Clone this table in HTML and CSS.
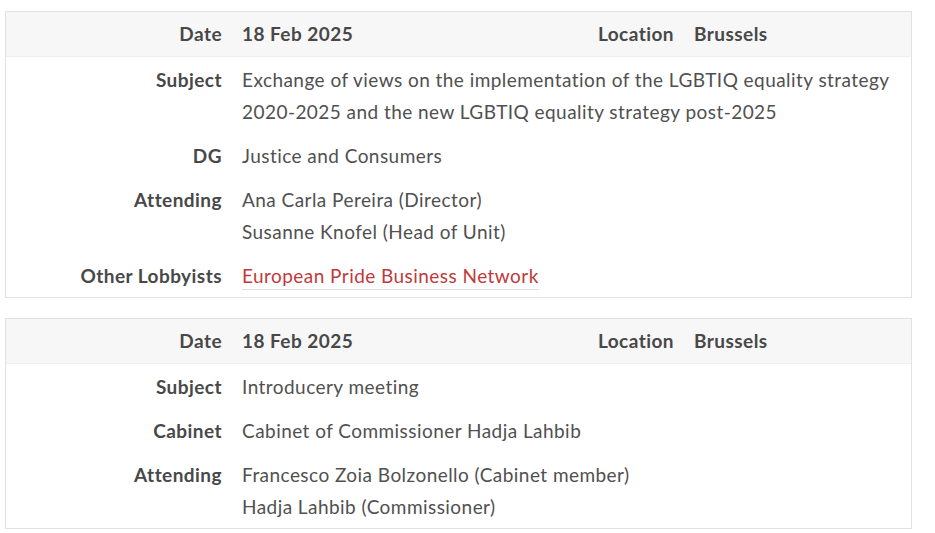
FILE: index.html
```html
<!DOCTYPE html>
<html lang="en">
<head>
<meta charset="utf-8">
<title>Meetings</title>
<link rel="stylesheet" href="styles.css">
</head>
<body>
<div class="list">
  <section class="card">
    <div class="head">
      <div class="lbl">Date</div>
      <div class="hval">18 Feb 2025</div>
      <div class="lbl">Location</div>
      <div class="hval">Brussels</div>
    </div>
    <div class="row">
      <div class="lbl">Subject</div>
      <div class="val">Exchange of views on the implementation of the LGBTIQ equality strategy 2020-2025 and the new LGBTIQ equality strategy post-2025</div>
    </div>
    <div class="row">
      <div class="lbl">DG</div>
      <div class="val">Justice and Consumers</div>
    </div>
    <div class="row">
      <div class="lbl">Attending</div>
      <div class="val">Ana Carla Pereira (Director)<br>Susanne Knofel (Head of Unit)</div>
    </div>
    <div class="row">
      <div class="lbl">Other Lobbyists</div>
      <div class="val"><a class="link" href="#">European Pride Business Network</a></div>
    </div>
  </section>
  <section class="card">
    <div class="head">
      <div class="lbl">Date</div>
      <div class="hval">18 Feb 2025</div>
      <div class="lbl">Location</div>
      <div class="hval">Brussels</div>
    </div>
    <div class="row">
      <div class="lbl">Subject</div>
      <div class="val">Introducery meeting</div>
    </div>
    <div class="row">
      <div class="lbl">Cabinet</div>
      <div class="val">Cabinet of Commissioner Hadja Lahbib</div>
    </div>
    <div class="row">
      <div class="lbl">Attending</div>
      <div class="val">Francesco Zoia Bolzonello (Cabinet member)<br>Hadja Lahbib (Commissioner)</div>
    </div>
  </section>
</div>
</body>
</html>
```
FILE: styles.css
```css
html, body {
  margin: 0;
  padding: 0;
  background: #ffffff;
}
body {
  font-family: Lato, "Open Sans", "Liberation Sans", sans-serif;
  font-size: 19px;
  line-height: 32px;
  letter-spacing: 0.45px;
  color: #505050;
}
.list {
  padding: 11px 0 0 5px;
  width: 907px;
  display: flex;
  flex-direction: column;
  gap: 20px;
}
.card {
  border: 1px solid #e2e2e2;
  padding-bottom: 5px;
}
.head {
  display: grid;
  grid-template-columns: 226px 352px 100px 1fr;
  background: #f7f7f7;
  border-bottom: 1px solid #efefef;
  padding: 6px 0;
  margin-bottom: 7px;
}
.row {
  display: grid;
  grid-template-columns: 226px 1fr;
  padding: 0 0 12px;
}
.row:last-child {
  padding-bottom: 0;
}
.lbl {
  text-align: right;
  font-weight: 700;
  color: #484848;
  padding: 0 10px;
}
.hval {
  font-weight: 700;
  color: #484848;
  padding: 0 10px;
}
.val {
  padding: 0 10px;
  color: #505050;
}
.link {
  color: #c0393b;
  text-decoration: none;
  border-bottom: 1px solid #dddddd;
  padding-bottom: 2px;
}
```
